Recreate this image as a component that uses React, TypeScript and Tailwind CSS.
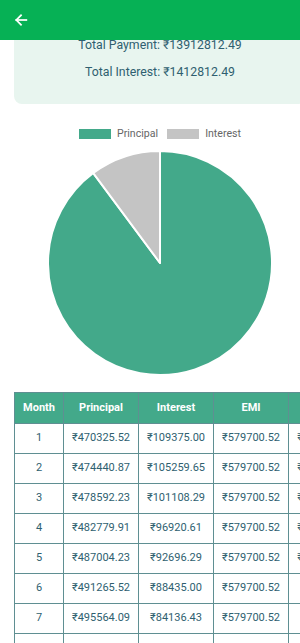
import React from "react";

const rows = [
  [1, "470325.52", "109375.00", "579700.52", "12029674.48"],
  [2, "474440.87", "105259.65", "579700.52", "11555233.61"],
  [3, "478592.23", "101108.29", "579700.52", "11076641.38"],
  [4, "482779.91", "96920.61", "579700.52", "10593861.47"],
  [5, "487004.23", "92696.29", "579700.52", "10106857.24"],
  [6, "491265.52", "88435.00", "579700.52", "9615591.72"],
  [7, "495564.09", "84136.43", "579700.52", "9120027.63"],
  [8, "499900.28", "79800.24", "579700.52", "8620127.35"],
];

export default function App() {
  const cx = 150;
  const cy = 112;
  const r = 112;
  const frac = 1412812.49 / 13912812.49;
  const a = frac * 2 * Math.PI;
  const px = cx - r * Math.sin(a);
  const py = cy - r * Math.cos(a);
  const interestPath = `M ${cx} ${cy} L ${cx} ${cy - r} A ${r} ${r} 0 0 0 ${px} ${py} Z`;
  const principalPath = `M ${cx} ${cy} L ${px} ${py} A ${r} ${r} 0 1 0 ${cx} ${cy - r} Z`;

  return (
    <div className="w-[300px] h-[643px] overflow-hidden bg-white" style={{ fontFamily: "Roboto, 'Noto Sans', sans-serif" }}>
      <div className="relative z-10 h-[40px] bg-[#06b155] flex items-center pl-[13px]">
        <svg width="16" height="16" viewBox="0 0 24 24" fill="none" stroke="white" strokeWidth="2.6" strokeLinecap="square">
          <path d="M20 12H5" />
          <path d="M12 5l-7 7 7 7" />
        </svg>
      </div>
      <div className="w-[420px] pl-[14px]">
        <div className="-mt-[10px] w-[292px] rounded-lg bg-[#e8f5ef] pt-[5px] pb-[22px] flex flex-col items-center gap-[7px] text-[12.3px] leading-[20px] text-[#2f5f70]">
          <div>Total Payment: ₹13912812.49</div>
          <div>Total Interest: ₹1412812.49</div>
        </div>
        <div className="w-[292px] mt-[24px] flex flex-col items-center">
          <div className="flex items-center text-[10.6px] leading-[12px] text-[#666666]">
            <span className="w-[32px] h-[10px] bg-[#43a98a] mr-[6px]" />
            <span>Principal</span>
            <span className="w-[32px] h-[10px] bg-[#c4c4c4] ml-[9px] mr-[6px]" />
            <span>Interest</span>
          </div>
          <svg width="302" height="226" viewBox="-1 -1 302 226" className="mt-[10px]">
            <path d={principalPath} fill="#43a98a" stroke="white" strokeWidth="2" strokeLinejoin="round" />
            <path d={interestPath} fill="#c4c4c4" stroke="white" strokeWidth="2" strokeLinejoin="round" />
          </svg>
        </div>
        <table className="mt-[16px] table-fixed w-[362px] border-collapse text-[11px] text-[#2f5f70] text-center">
          <colgroup>
            <col className="w-[49px]" />
            <col className="w-[75px]" />
            <col className="w-[75px]" />
            <col className="w-[75px]" />
            <col className="w-[88px]" />
          </colgroup>
          <thead>
            <tr className="bg-[#43a98a] text-white h-[31px]">
              <th className="border border-[#5f8f92] font-bold">Month</th>
              <th className="border border-[#5f8f92] font-bold">Principal</th>
              <th className="border border-[#5f8f92] font-bold">Interest</th>
              <th className="border border-[#5f8f92] font-bold">EMI</th>
              <th className="border border-[#5f8f92] font-bold">Balance</th>
            </tr>
          </thead>
          <tbody>
            {rows.map((row) => (
              <tr key={row[0]} className="h-[30px]">
                <td className="border border-[#5f8f92]">{row[0]}</td>
                <td className="border border-[#5f8f92]">₹{row[1]}</td>
                <td className="border border-[#5f8f92]">₹{row[2]}</td>
                <td className="border border-[#5f8f92]">₹{row[3]}</td>
                <td className="border border-[#5f8f92] whitespace-nowrap">₹{row[4]}</td>
              </tr>
            ))}
          </tbody>
        </table>
      </div>
    </div>
  );
}
